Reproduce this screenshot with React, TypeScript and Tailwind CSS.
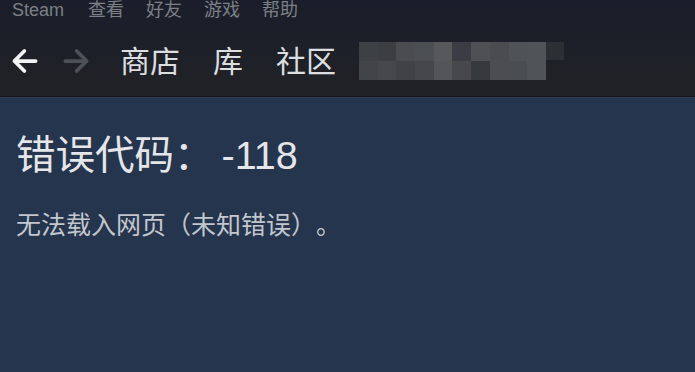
const font = { fontFamily: '"Liberation Sans", "Noto Sans CJK SC", sans-serif' };

const pixels = [
  ["#3d4045", "#3b3e43", "#4a4c50", "#4c4f52", "#56585a", "#3a3e44", "#4e5055", "#4a4c50", "#4f5256", "#505357"],
  ["#414449", "#46484c", "#404246", "#45474b", "#535557", "#46484c", "#36393e", "#4b4d51", "#4a4d52", "#505458"],
];

function Arrow({ dir, color }: { dir: "left" | "right"; color: string }) {
  return (
    <svg width="30" height="30" viewBox="0 0 24 24" fill="none" stroke={color} strokeWidth="3" strokeLinecap="round" strokeLinejoin="round">
      {dir === "left" ? (
        <path d="M3.5 12h17M3.5 12l8-8M3.5 12l8 8" />
      ) : (
        <path d="M20.5 12h-17M20.5 12l-8-8M20.5 12l-8 8" />
      )}
    </svg>
  );
}

export default function App() {
  return (
    <div className="w-[695px] h-[372px] overflow-hidden bg-[#25354d] [text-spacing-trim:space-all]" style={font}>
      <div className="h-[96px] flex flex-col bg-gradient-to-b from-[#1a1e2a] to-[#212226]">
        <div className="h-[20px] flex items-center gap-[22px] pl-[12px] text-[18px] leading-[20px] text-[#7c8087]">
          <span className="mr-[2px]">Steam</span>
          <span>查看</span>
          <span>好友</span>
          <span>游戏</span>
          <span>帮助</span>
        </div>
        <div className="flex-1 flex items-center pl-[10px] pt-[5px]">
          <Arrow dir="left" color="#f2f3f4" />
          <div className="w-[21px]" />
          <Arrow dir="right" color="#4c5158" />
          <div className="flex items-center gap-[33px] ml-[29px] pt-[2px] text-[30px] leading-[36px] text-[#dcdee0]">
            <span>商店</span>
            <span>库</span>
            <span>社区</span>
          </div>
          <div className="ml-[23px] flex items-start">
            <div className="grid grid-cols-10">
              {pixels.flat().map((c, i) => (
                <div key={i} className="w-[18.7px] h-[19px]" style={{ backgroundColor: c }} />
              ))}
            </div>
            <div className="w-[18px] h-[18px] bg-[#2c2f33]" />
          </div>
        </div>
      </div>
      <div className="h-[1px] bg-[#131519]" />
      <div className="h-[1px] bg-[#2f3c55]" />
      <div className="px-[16px] pt-[35px]">
        <div className="text-[39.5px] leading-[44px] text-[#e4e6e9]">
          错误代码：<span className="ml-[8px] text-[39.5px]">-118</span>
        </div>
        <div className="mt-[33px] text-[25px] leading-[30px] text-[#c2c7ce]">无法载入网页（未知错误）。</div>
      </div>
    </div>
  );
}
